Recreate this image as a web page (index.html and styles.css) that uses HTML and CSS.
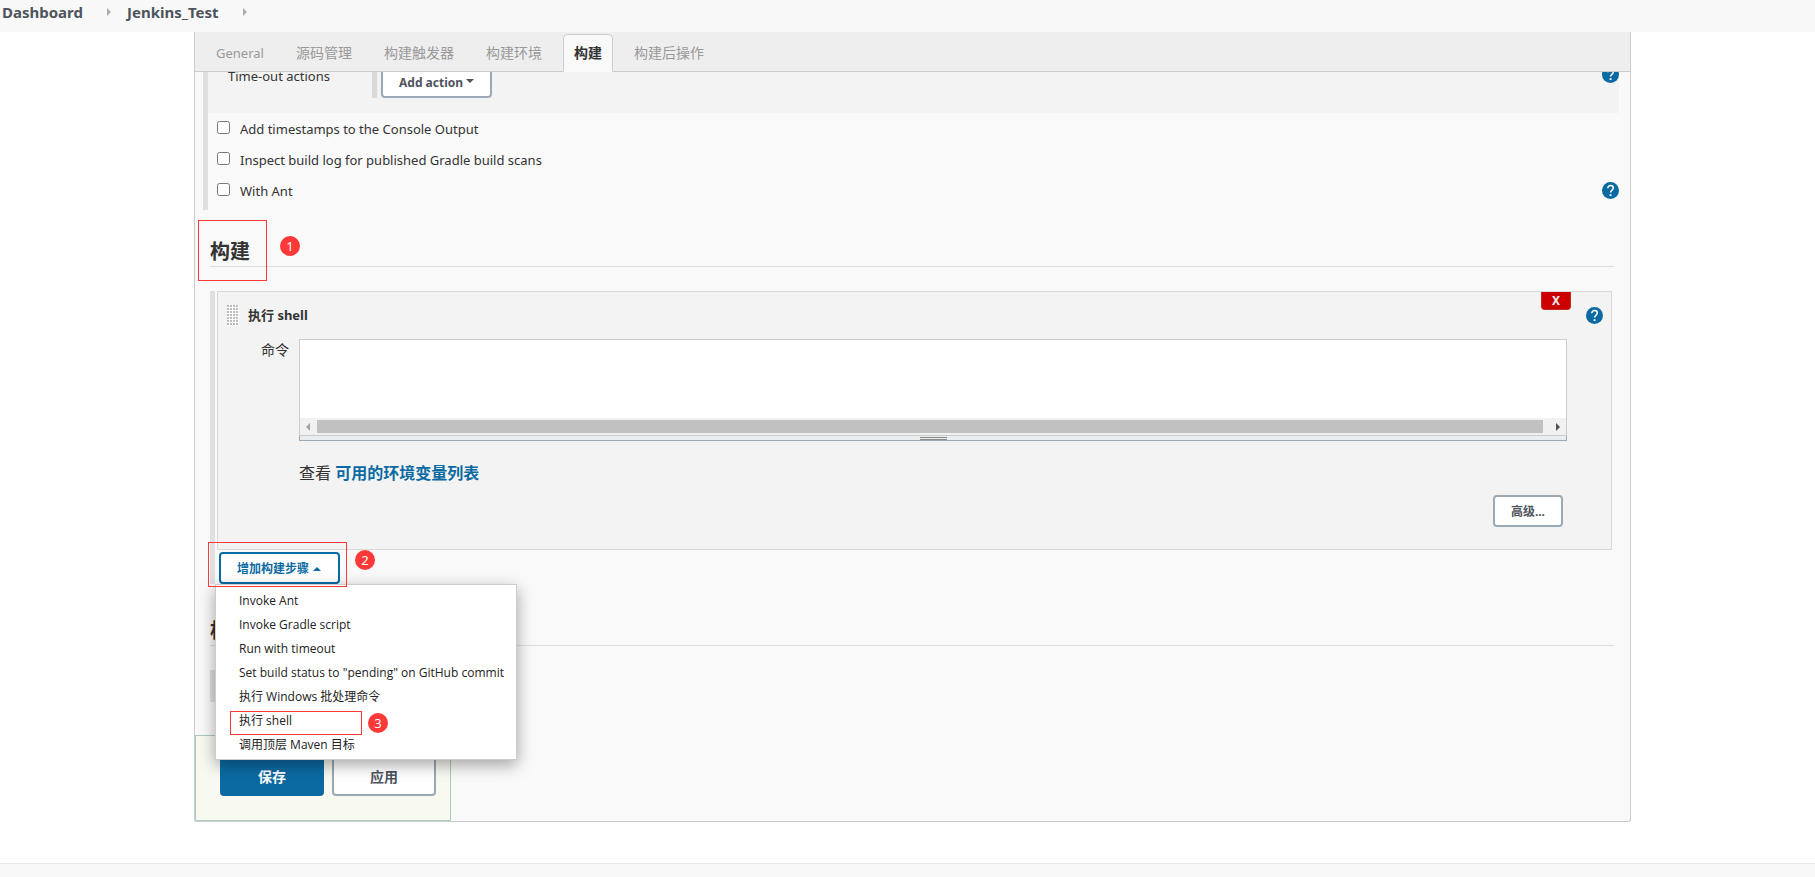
FILE: index.html
```html
<!DOCTYPE html>
<html lang="zh-CN">
<head>
    <meta charset="UTF-8">
    <meta name="viewport" content="width=device-width, initial-scale=1.0">
    <title>Jenkins_Test Config [Jenkins]</title>
    <link rel="stylesheet" href="styles.css">
</head>
<body>
    <svg class="sprite" aria-hidden="true">
        <symbol id="icon-help" viewBox="0 0 24 24">
            <circle cx="12" cy="12" r="12" fill="#0b6aa2"/>
            <path d="M8.2 8.9c0-2.4 1.6-3.9 3.9-3.9s3.8 1.5 3.8 3.6c0 2.9-3.8 3.2-3.8 6.2" fill="none" stroke="#fff" stroke-width="2.2"/>
            <rect x="10.8" y="17.2" width="2.6" height="2.6" fill="#fff"/>
        </symbol>
    </svg>

    <nav class="breadcrumbs">
        <a href="#">Dashboard</a>
        <span class="crumb-arrow"></span>
        <a href="#">Jenkins_Test</a>
        <span class="crumb-arrow"></span>
    </nav>

    <main class="config">
        <div class="tab-bar">
            <a href="#" class="tab tab-latin">General</a>
            <a href="#" class="tab">源码管理</a>
            <a href="#" class="tab">构建触发器</a>
            <a href="#" class="tab">构建环境</a>
            <a href="#" class="tab active">构建</a>
            <a href="#" class="tab">构建后操作</a>
        </div>

        <form id="configForm">
            <div class="environment">
                <div class="timeout-row">
                    <span class="timeout-label">Time-out actions</span>
                    <span class="timeout-bar"></span>
                    <button type="button" class="btn">Add action <span class="caret"></span></button>
                    <a href="#" class="help" aria-label="Help"><svg><use href="#icon-help"/></svg></a>
                </div>
                <div class="option">
                    <input type="checkbox" id="timestamps">
                    <label for="timestamps">Add timestamps to the Console Output</label>
                </div>
                <div class="option">
                    <input type="checkbox" id="gradleScan">
                    <label for="gradleScan">Inspect build log for published Gradle build scans</label>
                </div>
                <div class="option">
                    <input type="checkbox" id="withAnt">
                    <label for="withAnt">With Ant</label>
                    <a href="#" class="help" aria-label="Help"><svg><use href="#icon-help"/></svg></a>
                </div>
            </div>

            <section class="section">
                <h2>构建<span class="mark mark-title"></span><span class="badge badge-title">1</span></h2>
                <div class="steps">
                    <div class="step-card">
                        <button type="button" class="delete-btn">X</button>
                        <div class="step-header">
                            <span class="grip"></span>
                            <b>执行 shell</b>
                            <a href="#" class="help" aria-label="Help"><svg><use href="#icon-help"/></svg></a>
                        </div>
                        <div class="step-body">
                            <label for="command">命令</label>
                            <div class="editor">
                                <textarea id="command" spellcheck="false"></textarea>
                                <div class="scrollbar">
                                    <span class="scroll-left"></span>
                                    <span class="scroll-thumb"></span>
                                    <span class="scroll-right"></span>
                                </div>
                                <div class="resizer"><span></span></div>
                            </div>
                        </div>
                        <p class="env-help">查看 <a href="#">可用的环境变量列表</a></p>
                        <div class="step-footer">
                            <button type="button" class="btn">高级...</button>
                        </div>
                    </div>

                    <div class="add-step">
                        <button type="button" class="btn btn-open">增加构建步骤 <span class="caret caret-up"></span></button>
                        <span class="mark mark-button"></span>
                        <span class="badge badge-button">2</span>
                        <ul class="menu">
                            <li><a href="#">Invoke Ant</a></li>
                            <li><a href="#">Invoke Gradle script</a></li>
                            <li><a href="#">Run with timeout</a></li>
                            <li><a href="#">Set build status to "pending" on GitHub commit</a></li>
                            <li><a href="#">执行 Windows 批处理命令</a></li>
                            <li><a href="#">执行 shell</a><span class="mark mark-item"></span><span class="badge badge-item">3</span></li>
                            <li><a href="#">调用顶层 Maven 目标</a></li>
                        </ul>
                    </div>
                </div>
            </section>

            <section class="section">
                <h2>构建后操作</h2>
                <div class="steps steps-empty"></div>
            </section>

            <div class="save-bar">
                <button type="submit" class="btn-large btn-save">保存</button>
                <button type="button" class="btn-large">应用</button>
            </div>
        </form>
    </main>

    <footer class="page-footer"></footer>
</body>
</html>
```
FILE: styles.css
```css
:root {
    --blue: #0b6aa2;
    --border: #ccc;
    --bar: #e0e0e0;
    --button-border: #9aa9b5;
    --button-text: #4d545d;
    --mark: #ff3838;
}

* {
    box-sizing: border-box;
}

body {
    margin: 0;
    min-height: 100vh;
    display: flex;
    flex-direction: column;
    background: #fff;
    color: #333;
    font-family: "Noto Sans", "Noto Sans CJK SC", sans-serif;
    font-size: 13px;
    line-height: 20px;
}

a {
    color: inherit;
    text-decoration: none;
}

button {
    font-family: inherit;
    cursor: pointer;
}

.sprite {
    display: none;
}

.breadcrumbs {
    display: flex;
    align-items: center;
    height: 32px;
    padding: 0 2px 8px;
    background: #f8f8f8;
    color: #4d545d;
    font-size: 15px;
    font-weight: bold;
}

.crumb-arrow {
    margin: 0 16px 0 24px;
    border: 4px solid transparent;
    border-left-color: #aaa;
    border-right: 0;
}

.config {
    margin: 0 184px 41px 194px;
    border: 1px solid var(--border);
    border-top: 0;
    border-radius: 0 0 3px 3px;
    background: #f9f9f9;
}

.tab-bar {
    display: flex;
    align-items: flex-end;
    gap: 10px;
    height: 40px;
    padding-left: 10px;
    border-bottom: 1px solid var(--border);
    background: #eee;
}

.tab {
    height: 38px;
    margin-bottom: -1px;
    padding: 0 10px;
    border: 1px solid transparent;
    color: #999;
    font-size: 14px;
    line-height: 36px;
}

.tab-latin {
    font-size: 13px;
}

.tab.active {
    border-color: var(--border);
    border-bottom-color: #f9f9f9;
    border-radius: 5px 5px 0 0;
    background: #f9f9f9;
    color: #333;
    font-weight: bold;
}

.environment {
    margin: 0 11px 0 8px;
    padding-bottom: 4px;
    border-left: 5px solid var(--bar);
}

/* scrolled partly under the tab bar */
.timeout-row {
    display: flex;
    align-items: flex-start;
    height: 41px;
    overflow: hidden;
    background: #f3f3f3;
}

.timeout-row > * {
    margin-top: -6px;
}

.timeout-label {
    width: 164px;
    padding-left: 20px;
}

.timeout-bar {
    width: 5px;
    height: 32px;
    margin-right: 4px;
    background: #d9d9d9;
}

.option {
    display: flex;
    align-items: center;
    height: 31px;
    padding-left: 9px;
}

.option input {
    width: 13px;
    height: 13px;
    margin: 0 10px 2px 0;
}

.help {
    width: 17px;
    height: 17px;
    margin-left: auto;
}

.help svg {
    display: block;
    width: 17px;
    height: 17px;
}

.btn {
    height: 32px;
    padding: 2px 16px 0;
    border: 2px solid var(--button-border);
    border-radius: 4px;
    background: #fff;
    color: var(--button-text);
    font-size: 12px;
    font-weight: bold;
    line-height: 20px;
}

.btn-open {
    border-color: var(--blue);
    color: var(--blue);
}

.caret {
    display: inline-block;
    border: 4px solid transparent;
    border-top: 4px solid currentColor;
    border-bottom: 0;
    vertical-align: 4px;
}

.caret-up {
    margin: 0 1px;
    border-top: 0;
    border-bottom: 4px solid currentColor;
    vertical-align: 2px;
}

.section {
    padding: 28px 16px 0 15px;
}

h2 {
    position: relative;
    margin: 0 0 24px;
    border-bottom: 1px solid #ddd;
    font-size: 20px;
    line-height: 28px;
}

.steps {
    margin: 0 2px 5px 0;
    padding-left: 2px;
    border-left: 5px solid var(--bar);
}

.steps-empty {
    height: 32px;
}

.step-card {
    position: relative;
    padding: 12px 0 22px;
    border: 1px solid #d9d9d9;
    background: #f3f3f3;
}

.delete-btn {
    position: absolute;
    top: 0;
    right: 40px;
    width: 30px;
    height: 18px;
    padding: 0;
    border: 1px solid #c22b1c;
    border-top: 0;
    border-radius: 0 0 4px 4px;
    background: #c00;
    color: #eee;
    font-size: 12px;
    font-weight: bold;
    line-height: 18px;
}

.step-header {
    display: flex;
    align-items: center;
    height: 22px;
    padding: 0 8px 0 9px;
}

.grip {
    width: 12px;
    height: 21px;
    margin-right: 9px;
    background: conic-gradient(from 270deg at 2px 2px, #bbb 90deg, #fff 0) 0 0 / 3px 3px;
}

.step-body {
    display: flex;
    margin: 13px 44px 0 0;
}

.step-body label {
    width: 81px;
    padding-right: 10px;
    font-size: 14px;
    line-height: 22px;
    text-align: right;
}

.editor {
    flex: 1;
}

textarea {
    display: block;
    width: 100%;
    height: 79px;
    border: 1px solid var(--border);
    border-bottom: 0;
    outline: none;
    background: #fff;
    font-family: "Liberation Mono", monospace;
    resize: none;
}

.scrollbar {
    display: flex;
    align-items: center;
    height: 18px;
    padding: 0 6px;
    border: 1px solid var(--border);
    border-top: 0;
    background: #f1f1f1;
}

.scroll-left,
.scroll-right {
    border: 4px solid transparent;
}

.scroll-left {
    border-left: 0;
    border-right-color: #a3a3a3;
}

.scroll-right {
    border-right: 0;
    border-left-color: #505050;
}

.scroll-thumb {
    flex: 1;
    height: 13px;
    margin: 0 13px 0 7px;
    background: #c1c1c1;
}

.resizer {
    display: flex;
    justify-content: center;
    height: 5px;
    border: 1px solid var(--button-border);
    border-top: 0;
    background: #e9eef1;
}

.resizer span {
    width: 27px;
    height: 3px;
    margin-top: 1px;
    border: 1px solid #888;
    border-left: 0;
    border-right: 0;
}

.env-help {
    margin: 20px 0 10px 81px;
    font-size: 16px;
    line-height: 24px;
}

.env-help a {
    color: var(--blue);
    font-weight: bold;
}

.step-footer {
    display: flex;
    justify-content: flex-end;
    padding-right: 48px;
}

.add-step {
    position: relative;
    display: flex;
    padding: 2px 0 0 2px;
}

.menu {
    position: absolute;
    top: 34px;
    left: -2px;
    z-index: 2;
    width: 302px;
    margin: 0;
    padding: 4px 0 2px;
    border: 1px solid var(--border);
    background: #fff;
    box-shadow: 0 5px 15px rgba(0, 0, 0, 0.35);
    list-style: none;
    color: #222;
    font-family: "Open Sans", "Noto Sans CJK SC", sans-serif;
    font-size: 12px;
}

.menu li {
    position: relative;
    padding-left: 23px;
    line-height: 24px;
}

.save-bar {
    display: flex;
    gap: 8px;
    width: 256px;
    margin-top: 33px;
    padding: 20px 0 24px 24px;
    border: 1px solid #a9cbb9;
    background: #f8f9f1;
}

.btn-large {
    width: 104px;
    height: 40px;
    padding: 0;
    border: 2px solid var(--button-border);
    border-radius: 4px;
    background: #fff;
    color: var(--button-text);
    font-size: 14px;
    font-weight: bold;
}

.btn-save {
    border-color: var(--blue);
    background: var(--blue);
    color: #fff;
}

.page-footer {
    flex: 1;
    border-top: 1px solid #e8e8e8;
    background: #f8f8f8;
}

/* numbered callouts over the form */
.mark {
    position: absolute;
    z-index: 3;
    border: 1px solid var(--mark);
}

.mark-title {
    top: -18px;
    left: -12px;
    width: 69px;
    height: 61px;
}

.mark-button {
    top: -8px;
    left: -9px;
    width: 139px;
    height: 45px;
}

.mark-item {
    top: 2px;
    left: 14px;
    width: 132px;
    height: 24px;
}

.badge {
    position: absolute;
    z-index: 3;
    width: 20px;
    height: 20px;
    border-radius: 50%;
    background: var(--mark);
    color: #fff;
    font-size: 13px;
    font-weight: normal;
    line-height: 20px;
    text-align: center;
}

.badge-title {
    top: -2px;
    left: 70px;
}

.badge-button {
    top: 0;
    left: 138px;
}

.badge-item {
    top: 4px;
    left: 152px;
}
```
